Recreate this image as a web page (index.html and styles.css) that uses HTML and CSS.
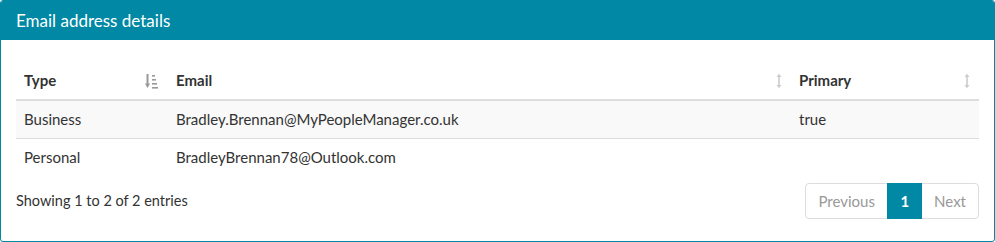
FILE: index.html
```html
<!DOCTYPE html>
<html>
<head>
<meta charset="utf-8">
<link rel="stylesheet" href="styles.css">
</head>
<body>
<div class="panel">
  <div class="panel-heading">Email address details</div>
  <div class="panel-body">
    <table class="grid">
      <colgroup>
        <col class="c-type">
        <col class="c-email">
        <col class="c-primary">
      </colgroup>
      <thead>
        <tr>
          <th>Type
            <svg class="sort active" width="13" height="16" viewBox="0 0 13 16"><path d="M2.5 1v10" stroke="#999" stroke-width="2"/><path d="M0 10.5h5L2.5 15z" fill="#999"/><rect x="7" y="2" width="3" height="1.6" fill="#999"/><rect x="7" y="6" width="4" height="1.6" fill="#999"/><rect x="7" y="10" width="5" height="1.6" fill="#999"/><rect x="7" y="14" width="6" height="1.6" fill="#999"/></svg>
          </th>
          <th>Email
            <svg class="sort" width="6" height="16" viewBox="0 0 6 16"><path d="M3 2v12" stroke="#ccc" stroke-width="1.6"/><path d="M0.5 4L3 0.8 5.5 4z M0.5 12L3 15.2 5.5 12z" fill="#ccc"/></svg>
          </th>
          <th>Primary
            <svg class="sort" width="6" height="16" viewBox="0 0 6 16"><path d="M3 2v12" stroke="#ccc" stroke-width="1.6"/><path d="M0.5 4L3 0.8 5.5 4z M0.5 12L3 15.2 5.5 12z" fill="#ccc"/></svg>
          </th>
        </tr>
      </thead>
      <tbody>
        <tr class="odd">
          <td>Business</td>
          <td>Bradley.Brennan@MyPeopleManager.co.uk</td>
          <td>true</td>
        </tr>
        <tr>
          <td>Personal</td>
          <td>BradleyBrennan78@Outlook.com</td>
          <td></td>
        </tr>
      </tbody>
    </table>
    <div class="footer">
      <div class="info">Showing 1 to 2 of 2 entries</div>
      <ul class="pagination">
        <li class="disabled wide">Previous</li>
        <li class="current">1</li>
        <li class="disabled">Next</li>
      </ul>
    </div>
  </div>
</div>
</body>
</html>
```
FILE: styles.css
```css
* { box-sizing: border-box; }
html, body { margin: 0; padding: 0; background: #fff; }
body {
  font-family: Lato, "Open Sans", sans-serif;
  font-size: 15px;
  color: #333;
}
.panel {
  width: 995px;
  height: 242px;
  border: 1px solid #0088a4;
  border-radius: 3px;
  background: #fff;
}
.panel-heading {
  background: #0088a4;
  color: #fff;
  font-size: 17px;
  height: 39px;
  line-height: 20px;
  padding: 10px 15px 9px;
  border-radius: 2px 2px 0 0;
}
.panel-body {
  padding: 15px 15px 15px 15px;
}
.grid {
  width: 963px;
  border-collapse: collapse;
  margin: 7px 0 6px;
}
.c-type { width: 152px; }
.c-email { width: 623px; }
.c-primary { width: 188px; }
.grid th, .grid td {
  padding: 8px;
  line-height: 21px;
  text-align: left;
  vertical-align: top;
}
.grid th {
  font-weight: bold;
  position: relative;
  border-bottom: 2px solid #ddd;
}
.grid td { border-top: 1px solid #ddd; }
.grid tbody tr:first-child td { border-top: 0; }
.grid tr.odd td { background: #f9f9f9; }
.sort {
  position: absolute;
  top: 11px;
}
.grid th:nth-child(1) .sort { right: 10px; }
.grid th:nth-child(2) .sort { right: 9px; }
.grid th:nth-child(3) .sort { right: 9px; }
.footer {
  display: flex;
  justify-content: space-between;
  align-items: flex-start;
}
.info {
  padding-top: 9px;
  line-height: 20px;
  font-size: 14.5px;
}
.pagination {
  list-style: none;
  margin: 1px 0 0;
  padding: 0;
  display: flex;
}
.pagination li {
  padding: 7px 12px;
  line-height: 20px;
  border: 1px solid #ddd;
  margin-left: -1px;
  color: #999;
  background: #fff;
}
.pagination li.wide { padding-left: 12.5px; padding-right: 12.5px; }
.pagination li:first-child { border-radius: 4px 0 0 4px; margin-left: 0; }
.pagination li:last-child { border-radius: 0 4px 4px 0; }
.pagination li.current {
  background: #0088a4;
  border-color: #0088a4;
  color: #fff;
  font-weight: bold;
  position: relative;
}
```
